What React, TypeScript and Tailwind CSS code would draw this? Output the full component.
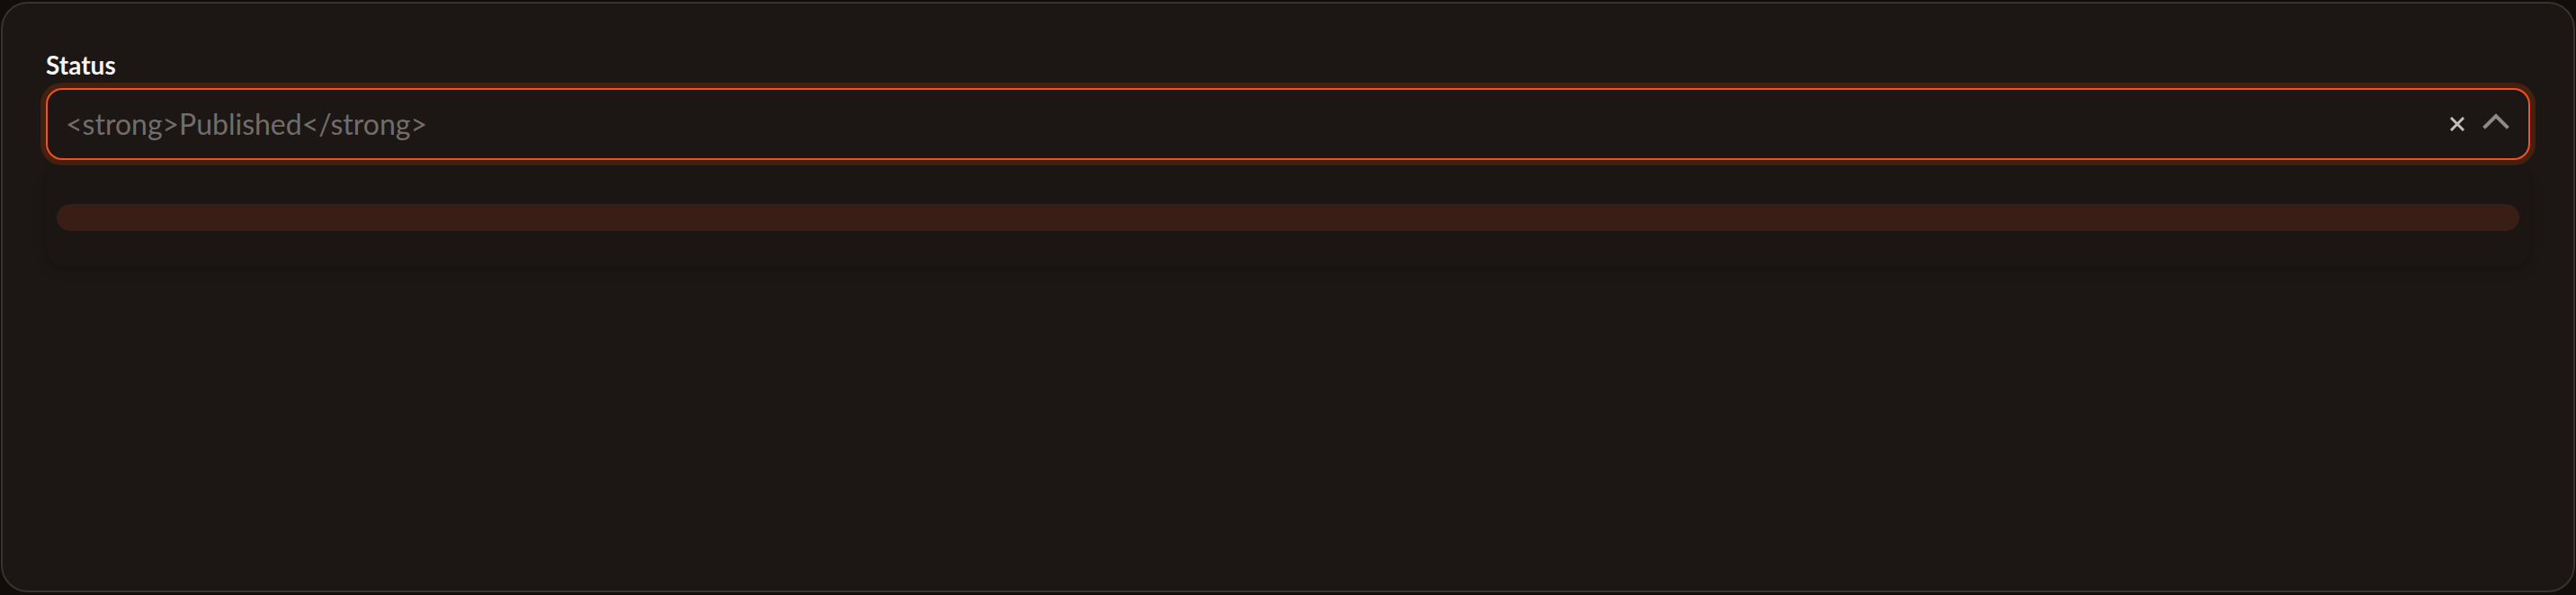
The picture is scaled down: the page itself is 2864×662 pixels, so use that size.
import React from "react";

export default function App() {
  return (
    <div className="w-[2864px] h-[662px] bg-[#110d0b] pt-[2px] pl-[1px] pr-[1px]" style={{ fontFamily: "Lato, 'Noto Sans', sans-serif" }}>
      <div className="h-[657px] rounded-[30px] border-2 border-[#3a322e] bg-[#1c1714] px-[48px] pt-[48px]">
        <div className="text-[28px] leading-[40px] font-bold text-[#f7f5f3]">Status</div>
        <div className="mt-[6px] relative">
          <div className="h-[80px] rounded-[18px] border-2 border-[#f4511e] ring-[6px] ring-[#45200f] bg-[#1c1714] flex items-center pl-[20px] pr-[20px]">
            <span className="flex-1 text-[32px] text-[#716d6a]">&lt;strong&gt;Published&lt;/strong&gt;</span>
            <svg width="16" height="16" viewBox="0 0 16 16" className="mr-[20px]">
              <path d="M2 2 L14 14 M14 2 L2 14" stroke="#c2bebb" strokeWidth="3" strokeLinecap="square" />
            </svg>
            <svg width="30" height="18" viewBox="0 0 30 18" className="mr-[1px] mb-[6px]">
              <polyline points="3,15 15,3 27,15" fill="none" stroke="#8d8986" strokeWidth="4" strokeLinecap="square" />
            </svg>
          </div>
          <div className="mt-[8px] rounded-[20px] bg-[#1b1613] shadow-[0_4px_14px_rgba(0,0,0,0.22)] pt-[41px] pb-[39px] px-[12px]">
            <div className="h-[30px] rounded-full bg-[#381e15]" />
          </div>
        </div>
      </div>
    </div>
  );
}
